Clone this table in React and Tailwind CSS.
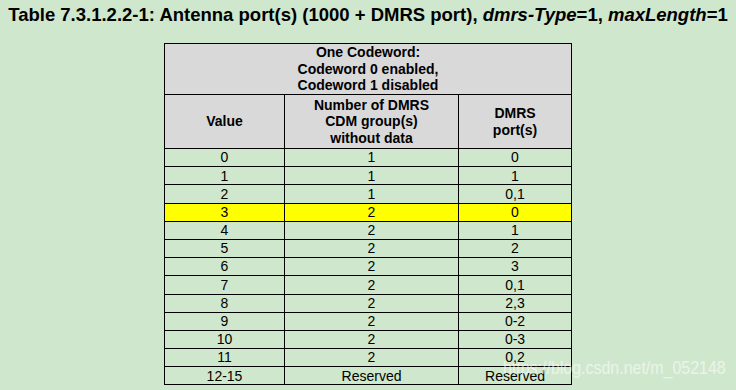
const ROWS = [
  ['0', '1', '0'],
  ['1', '1', '1'],
  ['2', '1', '0,1'],
  ['3', '2', '0'],
  ['4', '2', '1'],
  ['5', '2', '2'],
  ['6', '2', '3'],
  ['7', '2', '0,1'],
  ['8', '2', '2,3'],
  ['9', '2', '0-2'],
  ['10', '2', '0-3'],
  ['11', '2', '0,2'],
  ['12-15', 'Reserved', 'Reserved'],
]

export default function App() {
  return (
    <div
      className="relative w-[736px] h-[390px] bg-[#cfe7cc] overflow-hidden text-black"
      style={{ fontFamily: '"Liberation Sans", Arial, sans-serif' }}
    >
      {/* Caption */}
      <div className="pt-[4px] h-[43px] text-center text-[18.5px] font-bold leading-[21px] whitespace-nowrap">
        Table 7.3.1.2.2-1: Antenna port(s) (1000 + DMRS port), <i>dmrs-Type</i>=1, <i>maxLength</i>=1
      </div>

      {/* Table */}
      <table className="mx-auto border-collapse border border-black text-[14px] leading-[16.5px] text-center">
        <colgroup>
          <col className="w-[120px]" />
          <col className="w-[174px]" />
          <col className="w-[113px]" />
        </colgroup>
        <thead className="bg-[#d9d9d9] font-bold">
          <tr className="h-[51px]">
            <th colSpan={3} className="border border-black p-0 font-bold">
              One Codeword:<br />
              Codeword 0 enabled,<br />
              Codeword 1 disabled
            </th>
          </tr>
          <tr className="h-[54px]">
            <th className="border border-black p-0 font-bold">Value</th>
            <th className="border border-black p-0 font-bold">
              Number of DMRS<br />
              CDM group(s)<br />
              without data
            </th>
            <th className="border border-black p-0 font-bold">
              DMRS<br />
              port(s)
            </th>
          </tr>
        </thead>
        <tbody>
          {ROWS.map((r) => (
            <tr key={r[0]} className={`h-[18.2px] ${r[0] === '3' ? 'bg-[#ffff00]' : ''}`}>
              <td className="border border-black p-0">{r[0]}</td>
              <td className="border border-black p-0">{r[1]}</td>
              <td className="border border-black p-0">{r[2]}</td>
            </tr>
          ))}
        </tbody>
      </table>

      {/* Watermark */}
      <div className="absolute left-[503px] top-[357px] text-[19px] leading-[22px] text-white/55 whitespace-nowrap origin-left scale-x-[0.84]">
        https://blog.csdn.net/m_052148
      </div>
    </div>
  )
}
